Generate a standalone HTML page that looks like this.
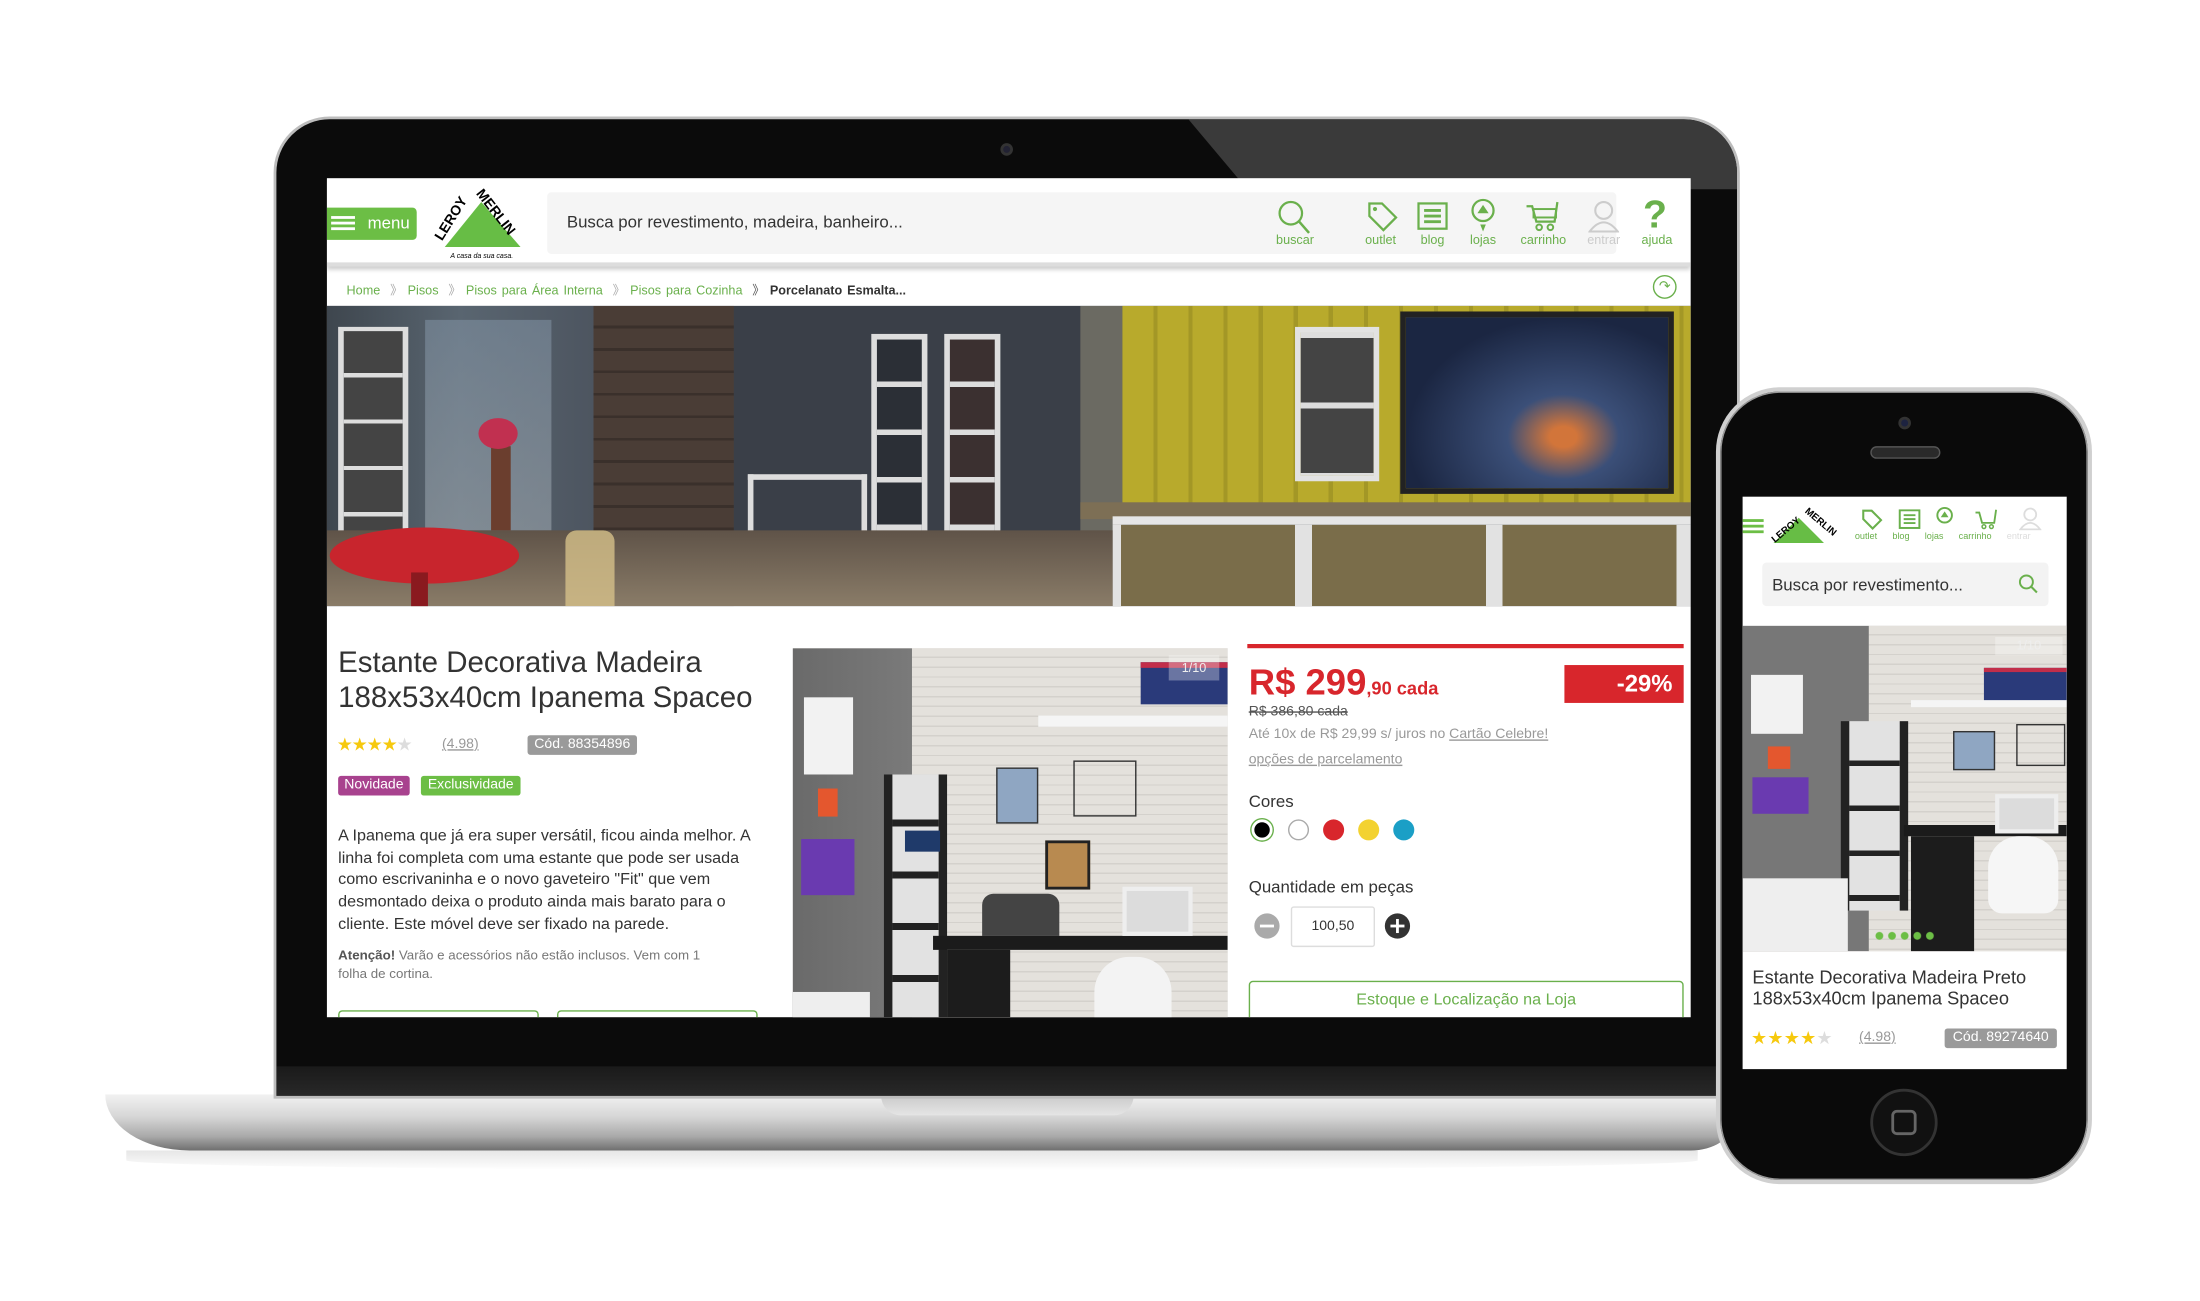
<!DOCTYPE html>
<html><head><meta charset="utf-8"><style>
*{margin:0;padding:0;box-sizing:border-box}
html,body{width:2200px;height:1300px;overflow:hidden;background:#fff}
#w{position:absolute;left:0;top:0;width:1568px;height:927px;transform:scale(1.40306);transform-origin:0 0;font-family:"Liberation Sans",sans-serif}
.a{position:absolute}
.g{color:#6ab04c}
.lbl{position:absolute;font-size:9px;color:#6ab04c;text-align:center;width:40px}
</style></head><body><div id="w">

<!-- laptop base -->
<div class="a" style="left:75px;top:780px;width:1160px;height:40px;border-radius:0 0 30px 60px/0 0 20px 40px;background:linear-gradient(#f2f2f2,#d6d6d6 40%,#a9a9a9 75%,#6f6f6f)"></div>
<div class="a" style="left:628px;top:780px;width:180px;height:15px;border-radius:0 0 14px 14px;background:linear-gradient(#c9c9c9,#e5e5e5)"></div>
<div class="a" style="left:90px;top:820px;width:1120px;height:14px;background:linear-gradient(#e6e6e6,#fff);border-radius:0 0 50% 50%"></div>
<!-- laptop lid -->
<div class="a" style="left:195px;top:83px;width:1045px;height:700px;border-radius:40px 40px 0 0;background:#0b0b0b;border:2px solid #bdbdbd;overflow:hidden">
 <div class="a" style="left:650px;top:0;width:420px;height:50px;background:#3a3a3a;clip-path:polygon(0 0,100% 0,100% 100%,10% 100%)"></div>
 <div class="a" style="left:0;top:675px;width:1045px;height:25px;background:linear-gradient(#1a1a1a,#2b2b2b)"></div>
</div>
<div class="a" style="left:713px;top:102px;width:9px;height:9px;border-radius:50%;background:#223;border:2px solid #333"></div>

<!-- laptop screen -->
<div class="a" style="left:233px;top:127px;width:972px;height:598px;background:#fff;overflow:hidden">
 <!-- header -->
 <div class="a" style="left:0;top:0;width:972px;height:63px;border-bottom:3px solid #ddd;box-shadow:0 2px 3px #ccc"></div>
 <div class="a" style="left:0;top:21px;width:64px;height:23px;background:#6cbe45;border-radius:0 3px 3px 0;color:#fff;font-size:12px;line-height:23px;padding-left:29px">menu</div>
 <div class="a" style="left:3px;top:27px;width:17px;height:2px;background:#fff;box-shadow:0 4px #fff,0 8px #fff"></div>
 <svg class="a" style="left:76px;top:7px" width="70" height="52" viewBox="0 0 70 52">
  <polygon points="34,10 62,42 8,42" fill="#67bd45"/>
  <text x="0" y="0" font-size="10" font-weight="bold" font-family="Liberation Sans" transform="translate(6,38) rotate(-58)">LEROY</text>
  <text x="0" y="0" font-size="10" font-weight="bold" font-family="Liberation Sans" transform="translate(30,4) rotate(52)">MERLIN</text>
  <text x="12" y="50" font-size="5" font-style="italic">A casa da sua casa.</text>
 </svg>
 <div class="a" style="left:157px;top:10px;width:762px;height:44px;background:#f5f5f5;border-radius:3px"></div>
 <div class="a" style="left:171px;top:24px;font-size:12px;color:#333">Busca por revestimento, madeira, banheiro...</div>
 <svg class="a" style="left:677px;top:15px" width="26" height="26" viewBox="0 0 26 26"><circle cx="10" cy="10" r="8" fill="none" stroke="#6ab04c" stroke-width="1.6"/><line x1="16" y1="16" x2="23" y2="24" stroke="#6ab04c" stroke-width="1.8"/></svg>
 <div class="lbl" style="left:670px;top:39px">buscar</div>
 <svg class="a" style="left:740px;top:15px" width="24" height="24" viewBox="0 0 24 24"><path d="M3 3 L12 3 L22 13 L13 22 L3 12 Z" fill="none" stroke="#6ab04c" stroke-width="1.6"/><circle cx="7" cy="7" r="1.5" fill="#6ab04c"/></svg>
 <div class="lbl" style="left:731px;top:39px">outlet</div>
 <svg class="a" style="left:777px;top:17px" width="22" height="20" viewBox="0 0 22 20"><rect x="1" y="1" width="20" height="18" fill="none" stroke="#6ab04c" stroke-width="1.6"/><path d="M5 6h12M5 10h12M5 14h12" stroke="#6ab04c" stroke-width="2"/></svg>
 <div class="lbl" style="left:768px;top:39px">blog</div>
 <svg class="a" style="left:815px;top:14px" width="18" height="26" viewBox="0 0 18 26"><circle cx="9" cy="9" r="7.5" fill="none" stroke="#6ab04c" stroke-width="1.6"/><path d="M5 11 L9 5 L13 11Z" fill="#6ab04c"/><path d="M7 19 L9 24 L11 19Z" fill="#6ab04c"/></svg>
 <div class="lbl" style="left:804px;top:39px">lojas</div>
 <svg class="a" style="left:854px;top:15px" width="26" height="24" viewBox="0 0 26 24"><path d="M1 5 L5 5 L8 16 L21 16 L23 2" fill="none" stroke="#6ab04c" stroke-width="1.6"/><rect x="6" y="7" width="16" height="6" fill="none" stroke="#6ab04c" stroke-width="1.4"/><circle cx="10" cy="20" r="2" fill="none" stroke="#6ab04c" stroke-width="1.4"/><circle cx="18" cy="20" r="2" fill="none" stroke="#6ab04c" stroke-width="1.4"/></svg>
 <div class="lbl" style="left:847px;top:39px">carrinho</div>
 <svg class="a" style="left:899px;top:15px" width="22" height="24" viewBox="0 0 22 24"><circle cx="11" cy="8" r="6" fill="none" stroke="#ccc" stroke-width="1.5"/><path d="M1 23 Q11 10 21 23Z" fill="none" stroke="#ccc" stroke-width="1.5"/></svg>
 <div class="lbl" style="left:890px;top:39px;color:#ccc">entrar</div>
 <div class="a" style="left:938px;top:10px;font-size:28px;color:#6ab04c;font-weight:bold">?</div>
 <div class="lbl" style="left:928px;top:39px">ajuda</div>
 <!-- breadcrumb -->
 <div class="a" style="left:14px;top:73px;font-size:9px;color:#6ab04c;white-space:nowrap;word-spacing:1px">Home <span style="color:#aaa">&nbsp;》</span> Pisos <span style="color:#aaa">&nbsp;》</span> Pisos para Área Interna <span style="color:#aaa">&nbsp;》</span> Pisos para Cozinha <span style="color:#555">&nbsp;》</span> <b style="color:#333">Porcelanato Esmalta...</b></div>
 <div class="a" style="left:945px;top:69px;width:17px;height:17px;border:1px solid #6ab04c;border-radius:50%;color:#6ab04c;font-size:10px;text-align:center;line-height:15px">↷</div>
 <!-- banner -->
 <div class="a" style="left:0;top:91px;width:972px;height:214px;overflow:hidden;background:#3a3f48">
  <div class="a" style="left:0;top:0;width:190px;height:214px;background:linear-gradient(90deg,#3e464e,#596570 50%,#4d5560)"></div>
  <div class="a" style="left:70px;top:10px;width:90px;height:150px;background:linear-gradient(#7e8fa0,#9aa4ac);opacity:.6"></div>
  <div class="a" style="left:8px;top:15px;width:50px;height:170px;border:4px solid #ddd;border-top-width:3px;background:repeating-linear-gradient(#444 0 30px,#ddd 30px 33px)"></div>
  <div class="a" style="left:190px;top:0;width:100px;height:214px;background:repeating-linear-gradient(#4a3d36 0 14px,#3a302b 14px 16px)"></div>
  <div class="a" style="left:388px;top:20px;width:40px;height:190px;border:4px solid #ddd;background:repeating-linear-gradient(#2b2f36 0 30px,#ddd 30px 34px)"></div>
  <div class="a" style="left:440px;top:20px;width:40px;height:190px;border:4px solid #ddd;background:repeating-linear-gradient(#3b3030 0 30px,#ddd 30px 34px)"></div>
  <div class="a" style="left:300px;top:120px;width:85px;height:70px;border:4px solid #ddd;border-bottom:none"></div>
  <div class="a" style="left:537px;top:0;width:30px;height:214px;background:#6b6a62"></div>
  <div class="a" style="left:567px;top:0;width:405px;height:150px;background:repeating-linear-gradient(90deg,#b8aa2c 0 22px,#a39726 22px 25px),#b5a735"></div>
  <div class="a" style="left:690px;top:15px;width:60px;height:110px;border:4px solid #e2e2e2;background:repeating-linear-gradient(#ddd 0 4px,#444 4px 50px)"></div>
  <div class="a" style="left:765px;top:4px;width:195px;height:130px;background:radial-gradient(ellipse at 60% 70%,#d2753a 0 6%,#3b4f78 25%,#1b2642 70%);border:4px solid #222"></div>
  <div class="a" style="left:537px;top:140px;width:435px;height:12px;background:#7d6f55"></div>
  <div class="a" style="left:560px;top:150px;width:412px;height:64px;background:repeating-linear-gradient(90deg,#e2e2e2 0 6px,#7a6d4a 6px 130px,#e2e2e2 130px 136px);border-top:6px solid #e6e6e6"></div>
  <div class="a" style="left:0;top:160px;width:560px;height:54px;background:linear-gradient(#5f5348,#8a7c68)"></div>
  <div class="a" style="left:2px;top:158px;width:135px;height:40px;border-radius:50%;background:#c8252d"></div>
  <div class="a" style="left:60px;top:190px;width:12px;height:30px;background:#8a1a1f"></div>
  <div class="a" style="left:170px;top:160px;width:35px;height:54px;background:#d6c08a;border-radius:8px 8px 0 0;opacity:.8"></div>
  <div class="a" style="left:117px;top:100px;width:14px;height:60px;background:#6b3e2e"></div>
  <div class="a" style="left:108px;top:80px;width:28px;height:22px;border-radius:50%;background:#c13050"></div>
 </div>
 <!-- left content -->
 <div class="a" style="left:8px;top:333px;font-size:21px;line-height:25px;color:#333;width:320px">Estante Decorativa Madeira 188x53x40cm Ipanema Spaceo</div>
 <div class="a" style="left:7px;top:396px;font-size:13px;color:#f6c90e;letter-spacing:-1px">★★★★<span style="color:#ddd">★</span></div>
 <div class="a" style="left:82px;top:398px;font-size:10px;color:#999;text-decoration:underline">(4.98)</div>
 <div class="a" style="left:143px;top:397px;width:78px;height:14px;background:#9a9a9a;border-radius:2px;color:#fff;font-size:10px;text-align:center;line-height:14px">Cód. 88354896</div>
 <div class="a" style="left:8px;top:426px;width:51px;height:14px;background:#a8428e;border-radius:2px;color:#fff;font-size:10px;text-align:center;line-height:14px">Novidade</div>
 <div class="a" style="left:67px;top:426px;width:71px;height:14px;background:#6cbe45;border-radius:2px;color:#fff;font-size:10px;text-align:center;line-height:14px">Exclusividade</div>
 <div class="a" style="left:8px;top:462px;width:300px;font-size:11.5px;line-height:15.7px;color:#333">A Ipanema que já era super versátil, ficou ainda melhor. A linha foi completa com uma estante que pode ser usada como escrivaninha e o novo gaveteiro "Fit" que vem desmontado deixa o produto ainda mais barato para o cliente. Este móvel deve ser fixado na parede.</div>
 <div class="a" style="left:8px;top:548px;width:280px;font-size:9.5px;line-height:13px;color:#777"><b style="color:#555">Atenção!</b> Varão e acessórios não estão inclusos. Vem com 1 folha de cortina.</div>
 <div class="a" style="left:8px;top:593px;width:143px;height:20px;border:1px solid #6ab04c;border-radius:3px"></div>
 <div class="a" style="left:164px;top:593px;width:143px;height:20px;border:1px solid #6ab04c;border-radius:3px"></div>
 <!-- product image -->
 <div class="a" style="left:332px;top:335px;width:310px;height:263px;overflow:hidden;background:#dedbd6">
  <div class="a" style="left:0;top:0;width:85px;height:263px;background:linear-gradient(90deg,#6a6a6a,#7a7a7a)"></div>
  <div class="a" style="left:85px;top:0;width:225px;height:263px;background:repeating-linear-gradient(#e4e1dc 0 6px,#d4d1cc 6px 7px)"></div>
  <div class="a" style="left:8px;top:35px;width:35px;height:55px;background:#f2f2f2"></div>
  <div class="a" style="left:18px;top:100px;width:14px;height:20px;background:#e4572e"></div>
  <div class="a" style="left:6px;top:136px;width:38px;height:40px;background:#6a3ab0"></div>
  <div class="a" style="left:65px;top:90px;width:45px;height:173px;border-left:6px solid #222;border-right:6px solid #222;background:repeating-linear-gradient(#e2e2e2 0 32px,#222 32px 37px)"></div>
  <div class="a" style="left:80px;top:130px;width:25px;height:15px;background:#1f3a6a"></div>
  <div class="a" style="left:248px;top:10px;width:62px;height:30px;background:#2a3a7a;border-top:4px solid #c22e4a"></div>
  <div class="a" style="left:175px;top:48px;width:135px;height:8px;background:#f5f5f5"></div>
  <div class="a" style="left:145px;top:85px;width:30px;height:40px;border:1px solid #333;background:#8fa6c2"></div>
  <div class="a" style="left:200px;top:80px;width:45px;height:40px;border:1px solid #333"></div>
  <div class="a" style="left:180px;top:137px;width:32px;height:35px;background:#b88a50;border:2px solid #222"></div>
  <div class="a" style="left:135px;top:175px;width:55px;height:30px;background:#444;border-radius:8px 8px 0 0"></div>
  <div class="a" style="left:100px;top:205px;width:210px;height:10px;background:#1b1b1b"></div>
  <div class="a" style="left:110px;top:215px;width:45px;height:48px;background:#1c1c1c"></div>
  <div class="a" style="left:235px;top:170px;width:50px;height:35px;background:#dcdcdc;border:3px solid #eee"></div>
  <div class="a" style="left:215px;top:220px;width:55px;height:60px;background:#f3f3f3;border-radius:25px 25px 10px 10px"></div>
  <div class="a" style="left:0;top:245px;width:55px;height:20px;background:#eee"></div>
  <div class="a" style="left:268px;top:5px;width:36px;height:18px;background:rgba(255,255,255,.3);color:#eee;font-size:9px;text-align:center;line-height:18px">1/10</div>
 </div>
 <!-- right price -->
 <div class="a" style="left:656px;top:332px;width:311px;height:3px;background:#d8262c"></div>
 <div class="a" style="left:657px;top:344px;color:#d8262c;font-weight:bold;white-space:nowrap"><span style="font-size:26px">R$ 299</span><span style="font-size:13px">,90 cada</span></div>
 <div class="a" style="left:882px;top:347px;width:85px;height:27px;background:#d8262c;color:#fff;font-weight:bold;font-size:17px;text-align:right;padding-right:8px;line-height:27px">-29%</div>
 <div class="a" style="left:657px;top:375px;font-size:10px;color:#555;text-decoration:line-through">R$ 386,80 cada</div>
 <div class="a" style="left:657px;top:391px;font-size:10px;color:#999">Até 10x de R$ 29,99 s/ juros no <u>Cartão Celebre!</u></div>
 <div class="a" style="left:657px;top:409px;font-size:10px;color:#999;text-decoration:underline">opções de parcelamento</div>
 <div class="a" style="left:657px;top:437px;font-size:12px;color:#333">Cores</div>
 <div class="a" style="left:659px;top:457px;width:15px;height:15px;border-radius:50%;background:#000;border:2px solid #fff;box-shadow:0 0 0 1px #6ab04c"></div>
 <div class="a" style="left:685px;top:457px;width:15px;height:15px;border-radius:50%;background:#fff;border:1px solid #aaa"></div>
 <div class="a" style="left:710px;top:457px;width:15px;height:15px;border-radius:50%;background:#d8262c"></div>
 <div class="a" style="left:735px;top:457px;width:15px;height:15px;border-radius:50%;background:#f3d230"></div>
 <div class="a" style="left:760px;top:457px;width:15px;height:15px;border-radius:50%;background:#1b9fc6"></div>
 <div class="a" style="left:657px;top:498px;font-size:12px;color:#333">Quantidade em peças</div>
 <div class="a" style="left:661px;top:524px;width:18px;height:18px;border-radius:50%;background:#aaa"><div class="a" style="left:4px;top:8px;width:10px;height:2px;background:#fff"></div></div>
 <div class="a" style="left:687px;top:519px;width:60px;height:29px;border:1px solid #ddd;border-radius:2px;font-size:10px;text-align:center;line-height:27px;color:#333">100,50</div>
 <div class="a" style="left:754px;top:524px;width:18px;height:18px;border-radius:50%;background:#333"><div class="a" style="left:4px;top:8px;width:10px;height:2px;background:#fff"></div><div class="a" style="left:8px;top:4px;width:2px;height:10px;background:#fff"></div></div>
 <div class="a" style="left:657px;top:572px;width:310px;height:30px;border:1px solid #6ab04c;border-radius:3px;color:#6ab04c;font-size:11.5px;text-align:center;line-height:26px">Estoque e Localização na Loja</div>
</div>

<!-- phone -->
<div class="a" style="left:1223px;top:276px;width:268px;height:568px;border-radius:46px;background:#0a0a0a;border:3px solid #d0d0d0;box-shadow:0 0 0 1px #999 inset"></div>
<div class="a" style="left:1353px;top:297px;width:9px;height:9px;border-radius:50%;background:#1d2340;border:2px solid #333"></div>
<div class="a" style="left:1333px;top:318px;width:50px;height:9px;border-radius:5px;background:#2a2a2a;border:1px solid #555"></div>
<div class="a" style="left:1333px;top:776px;width:48px;height:48px;border-radius:50%;background:#111;border:2px solid #333"></div>
<div class="a" style="left:1348px;top:791px;width:18px;height:18px;border-radius:4px;border:2px solid #666"></div>
<div class="a" style="left:1242px;top:354px;width:231px;height:408px;background:#fff;overflow:hidden">
 <div class="a" style="left:0;top:16px;width:15px;height:2px;background:#6cbe45;box-shadow:0 4px #6cbe45,0 8px #6cbe45"></div>
 <svg class="a" style="left:18px;top:5px" width="50" height="32" viewBox="0 0 50 32"><polygon points="22,10 40,28 4,28" fill="#67bd45"/><text font-size="7" font-weight="bold" transform="translate(5,28) rotate(-40)">LEROY</text><text font-size="7" font-weight="bold" transform="translate(26,6) rotate(40)">MERLIN</text></svg>
 <svg class="a" style="left:83px;top:8px" width="18" height="16" viewBox="0 0 24 24"><path d="M3 3 L12 3 L22 13 L13 22 L3 12 Z" fill="none" stroke="#6ab04c" stroke-width="2.2"/></svg>
 <svg class="a" style="left:110px;top:9px" width="18" height="14" viewBox="0 0 22 20"><rect x="1" y="1" width="20" height="18" fill="none" stroke="#6ab04c" stroke-width="2"/><path d="M5 6h12M5 10h12M5 14h12" stroke="#6ab04c" stroke-width="2"/></svg>
 <svg class="a" style="left:137px;top:7px" width="14" height="18" viewBox="0 0 18 26"><circle cx="9" cy="9" r="7.5" fill="none" stroke="#6ab04c" stroke-width="2"/><path d="M5 11 L9 5 L13 11Z" fill="#6ab04c"/></svg>
 <svg class="a" style="left:164px;top:8px" width="20" height="16" viewBox="0 0 26 24"><path d="M1 5 L5 5 L8 16 L21 16 L23 2" fill="none" stroke="#6ab04c" stroke-width="2"/><circle cx="10" cy="20" r="2" fill="none" stroke="#6ab04c" stroke-width="1.6"/><circle cx="18" cy="20" r="2" fill="none" stroke="#6ab04c" stroke-width="1.6"/></svg>
 <svg class="a" style="left:197px;top:7px" width="16" height="17" viewBox="0 0 22 24"><circle cx="11" cy="8" r="6" fill="none" stroke="#ddd" stroke-width="1.8"/><path d="M1 23 Q11 10 21 23Z" fill="none" stroke="#ddd" stroke-width="1.8"/></svg>
 <div class="a" style="left:80px;top:25px;font-size:6.5px;color:#6ab04c;word-spacing:9px;white-space:nowrap">outlet blog lojas carrinho <span style="color:#ddd">entrar</span></div>
 <div class="a" style="left:14px;top:47px;width:204px;height:31px;background:#f3f3f3;border-radius:3px"></div>
 <div class="a" style="left:21px;top:56px;font-size:12px;color:#333">Busca por revestimento...</div>
 <svg class="a" style="left:196px;top:55px" width="16" height="15" viewBox="0 0 26 26"><circle cx="10" cy="10" r="8" fill="none" stroke="#6ab04c" stroke-width="2.4"/><line x1="16" y1="16" x2="23" y2="23" stroke="#6ab04c" stroke-width="2.6"/></svg>
 <div class="a" style="left:0;top:92px;width:231px;height:232px;overflow:hidden;background:#dedbd6">
  <div class="a" style="left:0;top:0;width:90px;height:232px;background:#777"></div>
  <div class="a" style="left:90px;top:0;width:141px;height:232px;background:repeating-linear-gradient(#e4e1dc 0 6px,#d4d1cc 6px 7px)"></div>
  <div class="a" style="left:6px;top:35px;width:37px;height:42px;background:#f2f2f2"></div>
  <div class="a" style="left:18px;top:86px;width:16px;height:16px;background:#e4572e"></div>
  <div class="a" style="left:7px;top:108px;width:40px;height:26px;background:#6a3ab0"></div>
  <div class="a" style="left:70px;top:68px;width:48px;height:135px;border-left:6px solid #222;border-right:6px solid #222;background:repeating-linear-gradient(#e2e2e2 0 28px,#222 28px 32px)"></div>
  <div class="a" style="left:172px;top:30px;width:59px;height:24px;background:#2a3a7a;border-top:3px solid #c22e4a"></div>
  <div class="a" style="left:120px;top:53px;width:111px;height:5px;background:#f5f5f5"></div>
  <div class="a" style="left:150px;top:75px;width:30px;height:28px;border:1px solid #333;background:#8fa6c2"></div>
  <div class="a" style="left:195px;top:70px;width:35px;height:30px;border:1px solid #333"></div>
  <div class="a" style="left:115px;top:142px;width:116px;height:8px;background:#1b1b1b"></div>
  <div class="a" style="left:120px;top:150px;width:45px;height:82px;background:#1c1c1c"></div>
  <div class="a" style="left:0;top:180px;width:75px;height:52px;background:#eee"></div>
  <div class="a" style="left:180px;top:120px;width:45px;height:28px;background:#dcdcdc;border:3px solid #eee"></div>
  <div class="a" style="left:175px;top:150px;width:50px;height:55px;background:#f6f6f6;border-radius:22px 22px 10px 10px"></div>
  <div class="a" style="left:180px;top:8px;width:48px;height:13px;background:rgba(255,255,255,.3);color:#eee;font-size:9px;text-align:center;line-height:13px">1/10</div>
  <div class="a" style="left:93px;top:218px;width:45px;height:6px;background:radial-gradient(circle,#6cbe45 2.5px,transparent 3px) 0 0/9px 6px"></div>
 </div>
 <div class="a" style="left:7px;top:335px;width:220px;font-size:13px;line-height:15px;color:#333">Estante Decorativa Madeira Preto 188x53x40cm Ipanema Spaceo</div>
 <div class="a" style="left:6px;top:378px;font-size:13px;color:#f6c90e;letter-spacing:0">★★★★<span style="color:#ddd">★</span></div>
 <div class="a" style="left:83px;top:380px;font-size:10px;color:#999;text-decoration:underline">(4.98)</div>
 <div class="a" style="left:144px;top:379px;width:80px;height:14px;background:#9a9a9a;border-radius:2px;color:#fff;font-size:10px;text-align:center;line-height:14px">Cód. 89274640</div>
</div>

</div></body></html>
